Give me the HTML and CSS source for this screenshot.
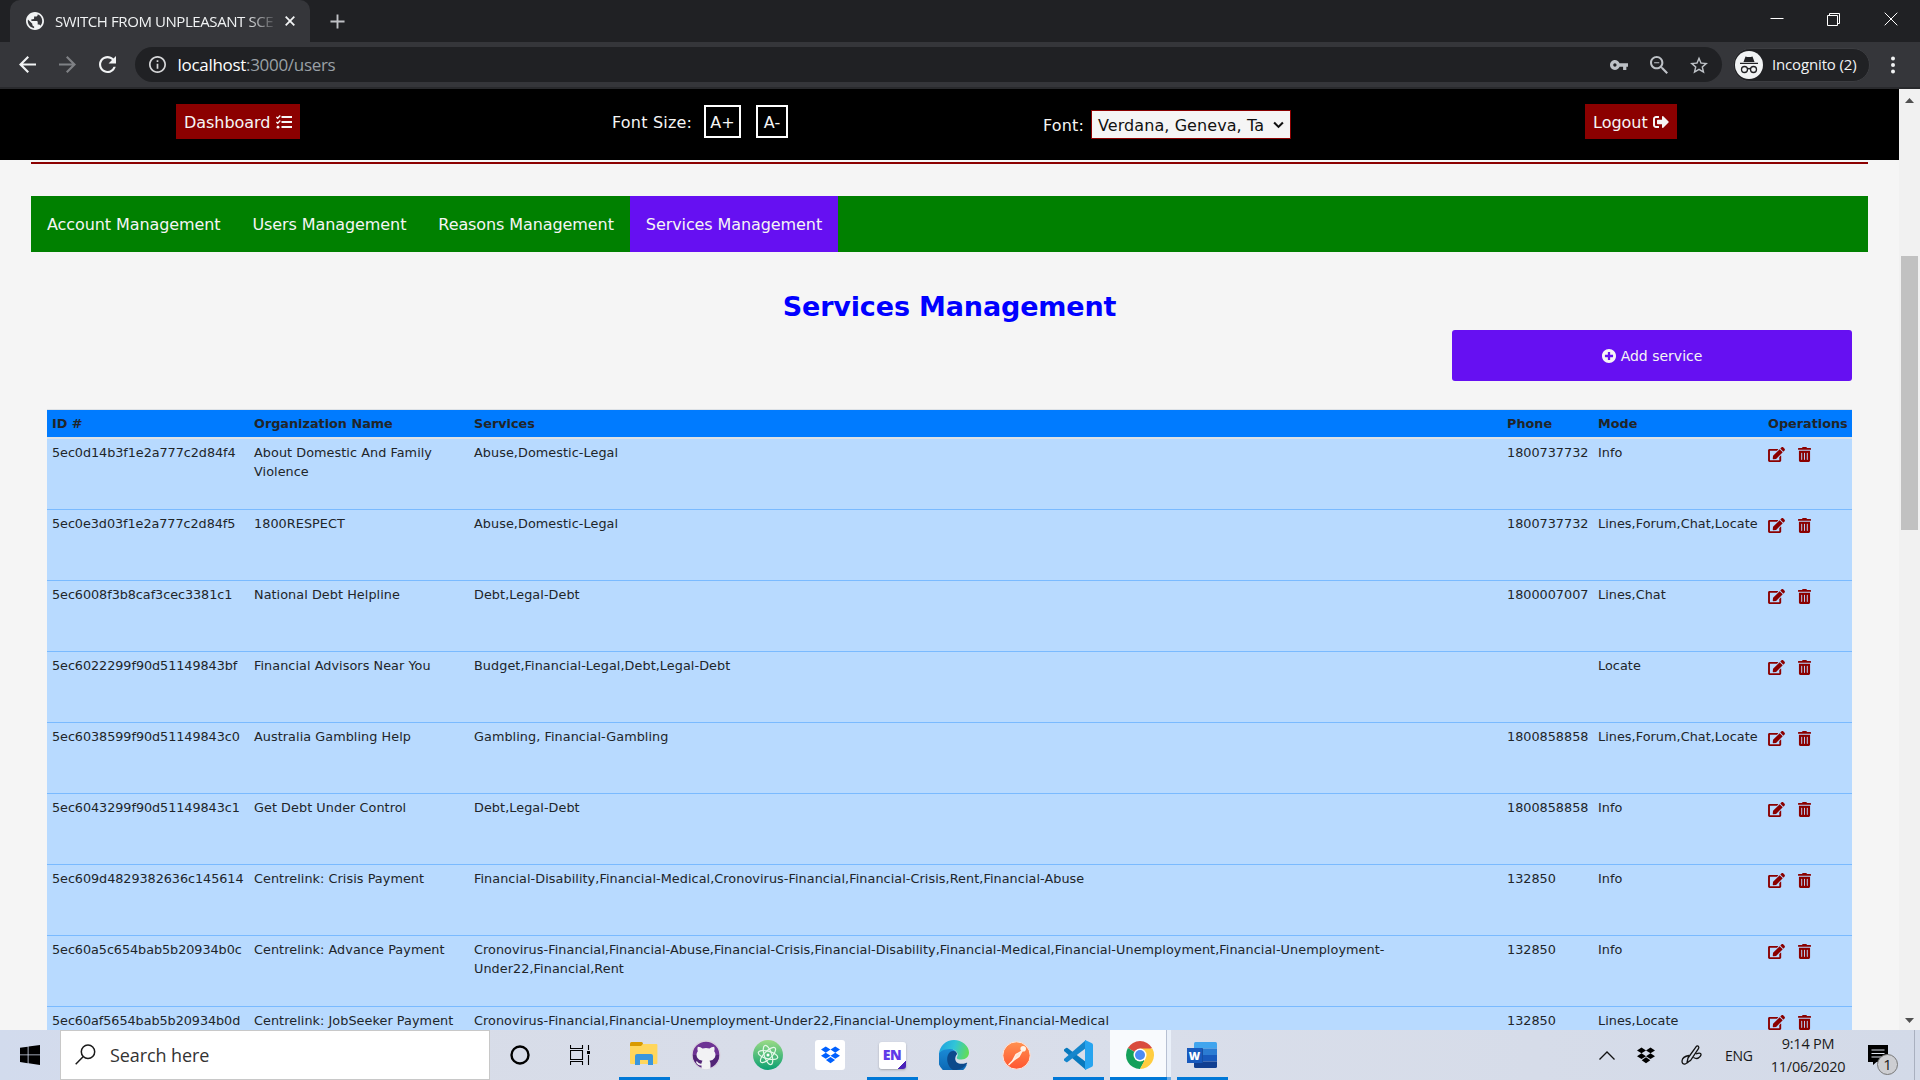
FILE: index.html
```html
<!DOCTYPE html>
<html lang="en">
<head>
<meta charset="utf-8">
<title>Services Management</title>
<link rel="stylesheet" href="styles.css">
</head>
<body>
<svg class="defs" width="0" height="0">
  <symbol id="edit" viewBox="0 0 576 512"><path d="M402.6 83.2l90.2 90.2c3.8 3.8 3.8 10 0 13.8L274.4 405.6l-92.8 10.3c-12.4 1.4-22.9-9.1-21.5-21.5l10.3-92.8L388.8 83.2c3.8-3.8 10-3.8 13.8 0zm162-22.9l-48.8-48.8c-15.2-15.2-39.9-15.2-55.2 0l-35.4 35.4c-3.8 3.8-3.8 10 0 13.8l90.2 90.2c3.8 3.8 10 3.8 13.8 0l35.4-35.4c15.2-15.3 15.2-40 0-55.2zM384 346.2V448H64V128h229.8c3.2 0 6.2-1.3 8.5-3.5l40-40c7.6-7.6 2.2-20.5-8.5-20.5H48C21.5 64 0 85.5 0 112v352c0 26.5 21.5 48 48 48h352c26.5 0 48-21.5 48-48V306.2c0-10.7-12.9-16-20.5-8.5l-40 40c-2.2 2.3-3.5 5.3-3.5 8.5z"/></symbol>
  <symbol id="trash" viewBox="0 0 448 512"><path d="M32 464a48 48 0 0 0 48 48h288a48 48 0 0 0 48-48V128H32zm272-256a16 16 0 0 1 32 0v224a16 16 0 0 1-32 0zm-96 0a16 16 0 0 1 32 0v224a16 16 0 0 1-32 0zm-96 0a16 16 0 0 1 32 0v224a16 16 0 0 1-32 0zM432 32H312l-9.4-18.7A24 24 0 0 0 281.1 0H166.8a23.72 23.72 0 0 0-21.4 13.3L136 32H16A16 16 0 0 0 0 48v32a16 16 0 0 0 16 16h416a16 16 0 0 0 16-16V48a16 16 0 0 0-16-16z"/></symbol>
  <symbol id="dropbox" viewBox="0 0 18 16"><path d="M4.5 0L9 2.9 4.5 5.8 0 2.9zM13.5 0L18 2.9l-4.5 2.9L9 2.9zM4.5 5.8L9 8.7l-4.500 2.900L0 8.700zM13.500 5.800L18 8.700l-4.500 2.900L9 8.700zM9 9.800l4.300 2.900L9 15.800l-4.300-3.100z"/></symbol>
</svg>

<header class="tabstrip">
  <div class="tab">
    <svg class="favicon" viewBox="2 2 20 20"><path d="M12 2C6.480 2 2 6.480 2 12s4.480 10 10 10 10-4.480 10-10S17.520 2 12 2zm-1 17.930c-3.950-.490-7-3.850-7-7.930 0-.620.080-1.210.210-1.790L9 15v1c0 1.100.900 2 2 2v1.930zm6.900-2.540c-.260-.810-1-1.390-1.900-1.390h-1v-3c0-.550-.450-1-1-1H8v-2h2c.550 0 1-.450 1-1V7h2c1.100 0 2-.900 2-2v-.410c2.930 1.190 5 4.060 5 7.410 0 2.080-.800 3.970-2.100 5.390z"/></svg>
    <span class="tab-title">SWITCH FROM UNPLEASANT SCE</span>
    <svg class="tab-close" viewBox="0 0 10 10"><path d="M.7.7l8.600 8.600M9.300.7L.7 9.300"/></svg>
  </div>
  <svg class="tab-new" viewBox="0 0 16 16"><path d="M8 .5v15M.5 8h15"/></svg>
  <div class="window-controls">
    <svg viewBox="0 0 14 14"><path d="M.5 6.500h13"/></svg>
    <svg viewBox="0 0 14 14"><path d="M.5 3.500h10v10h-10zM2.500 3.500v-2h10v10h-2"/></svg>
    <svg viewBox="0 0 14 14"><path d="M.7.700l12.600 12.600M13.300.700L.7 13.300"/></svg>
  </div>
</header>

<div class="toolbar">
  <div class="nav-buttons">
    <svg viewBox="4 4 16 16"><path d="M20 11H7.830l5.590-5.590L12 4l-8 8 8 8 1.410-1.410L7.830 13H20v-2z"/></svg>
    <svg class="dim" viewBox="4 4 16 16"><path d="M12 4l-1.410 1.410L16.170 11H4v2h12.170l-5.580 5.590L12 20l8-8z"/></svg>
    <svg viewBox="4 4 16 16"><path d="M17.650 6.350C16.200 4.900 14.210 4 12 4c-4.420 0-7.990 3.580-7.990 8s3.570 8 7.990 8c3.730 0 6.840-2.550 7.730-6h-2.080c-.820 2.330-3.040 4-5.650 4-3.310 0-6-2.690-6-6s2.690-6 6-6c1.660 0 3.140.690 4.220 1.780L13 11h7V4l-2.350 2.350z"/></svg>
  </div>
  <div class="omnibox">
    <svg class="info" viewBox="2 2 20 20"><path d="M11 17h2v-6h-2v6zm1-15C6.480 2 2 6.480 2 12s4.480 10 10 10 10-4.480 10-10S17.520 2 12 2zm0 18c-4.410 0-8-3.590-8-8s3.590-8 8-8 8 3.590 8 8-3.590 8-8 8zM11 9h2V7h-2v2z"/></svg>
    <span class="url">localhost<span class="path">:3000/users</span></span>
    <div class="omni-icons">
      <svg viewBox="1 6 22 12"><path d="M12.650 10C11.830 7.670 9.610 6 7 6c-3.310 0-6 2.690-6 6s2.690 6 6 6c2.610 0 4.830-1.670 5.650-4H17v4h4v-4h2v-4H12.650zM7 14c-1.100 0-2-.900-2-2s.900-2 2-2 2 .900 2 2-.900 2-2 2z"/></svg>
      <svg viewBox="3 3 17.500 17.500"><path d="M15.500 14h-.790l-.280-.270C15.410 12.590 16 11.110 16 9.500 16 5.910 13.090 3 9.500 3S3 5.910 3 9.500 5.910 16 9.500 16c1.610 0 3.090-.590 4.230-1.570l.270.280v.790l5 4.990L20.490 19l-4.990-5zm-6 0C7.010 14 5 11.990 5 9.500S7.010 5 9.500 5 14 7.010 14 9.500 11.990 14 9.500 14zM7 9h5v1H7z"/></svg>
      <svg viewBox="2 2 20 19"><path d="M22 9.240l-7.190-.620L12 2 9.190 8.630 2 9.240l5.460 4.730L5.820 21 12 17.270 18.180 21l-1.630-7.030L22 9.240zM12 15.400l-3.760 2.270 1-4.280-3.320-2.880 4.380-.380L12 6.100l1.710 4.040 4.380.380-3.320 2.880 1 4.280L12 15.400z"/></svg>
    </div>
  </div>
  <div class="incognito">
    <svg viewBox="0 0 28 28"><circle cx="14" cy="14" r="14" fill="#f1f3f4"/><path fill="#202124" d="M10.500 5.500q3.500 1 7 0l2 5.500h-11zM5 11.800h18V13H5z"/><g fill="none" stroke="#202124" stroke-width="1.300"><circle cx="9.500" cy="18.500" r="3"/><circle cx="18.500" cy="18.500" r="3"/><path d="M12.500 18q1.500-1 3 0"/></g></svg>
    <span>Incognito (2)</span>
  </div>
  <svg class="menu" viewBox="0 0 4 18"><circle cx="2" cy="2.500" r="2"/><circle cx="2" cy="9" r="2"/><circle cx="2" cy="15.500" r="2"/></svg>
</div>

<div class="viewport">
  <main class="page">
    <div class="topbar">
      <a class="top-btn dashboard"><span>Dashboard</span><svg viewBox="0 0 16 14"><path d="M5.500 1h10.500v2H5.500zM5.500 6h10.500v2H5.500zM5.500 11h10.500v2H5.500z"/><path class="ticks" d="M.4 1.900l1.300 1.300L4.300.5M.4 6.900l1.300 1.300L4.300 5.500"/><circle cx="2" cy="12.200" r="1.400"/></svg></a>
      <div class="font-size"><span>Font Size:</span><button>A+</button><button>A-</button></div>
      <div class="font-family"><span>Font:</span><div class="select"><span>Verdana, Geneva, Ta</span><svg viewBox="0 0 10 7"><path d="M1 1.200l4 4 4-4"/></svg></div></div>
      <a class="top-btn logout"><span>Logout</span><svg viewBox="0 0 512 512"><path d="M497 273L329 441c-15 15-41 4.500-41-17v-96H152c-13.300 0-24-10.700-24-24v-96c0-13.300 10.700-24 24-24h136V88c0-21.400 25.900-32 41-17l168 168c9.300 9.400 9.300 24.600 0 34zM192 436v-40c0-6.600-5.400-12-12-12H96c-17.700 0-32-14.300-32-32V160c0-17.700 14.300-32 32-32h84c6.600 0 12-5.400 12-12V76c0-6.600-5.400-12-12-12H96c-53 0-96 43-96 96v192c0 53 43 96 96 96h84c6.600 0 12-5.400 12-12z"/></svg></a>
    </div>
    <div class="content">
      <div class="rule"></div>
      <nav class="tabs">
        <a>Account Management</a><a>Users Management</a><a>Reasons Management</a><a class="active">Services Management</a>
      </nav>
      <section class="panel">
        <h1>Services Management</h1>
        <button class="add"><svg viewBox="8 8 496 496"><path d="M256 8C119 8 8 119 8 256s111 248 248 248 248-111 248-248S393 8 256 8zm144 276c0 6.600-5.400 12-12 12h-92v92c0 6.600-5.400 12-12 12h-56c-6.600 0-12-5.400-12-12v-92h-92c-6.600 0-12-5.400-12-12v-56c0-6.600 5.400-12 12-12h92v-92c0-6.600 5.400-12 12-12h56c6.600 0 12 5.400 12 12v92h92c6.600 0 12 5.400 12 12v56z"/></svg>Add service</button>
        <table class="services">
          <colgroup><col class="c-id"><col class="c-org"><col class="c-serv"><col class="c-phone"><col class="c-mode"><col class="c-ops"></colgroup>
          <thead><tr><th>ID #</th><th>Organization Name</th><th>Services</th><th>Phone</th><th>Mode</th><th>Operations</th></tr></thead>
          <tbody>
            <tr><td>5ec0d14b3f1e2a777c2d84f4</td><td>About Domestic And Family Violence</td><td>Abuse,Domestic-Legal</td><td>1800737732</td><td>Info</td><td><svg class="i-edit"><use href="#edit"/></svg><svg class="i-trash"><use href="#trash"/></svg></td></tr>
            <tr><td>5ec0e3d03f1e2a777c2d84f5</td><td>1800RESPECT</td><td>Abuse,Domestic-Legal</td><td>1800737732</td><td>Lines,Forum,Chat,Locate</td><td><svg class="i-edit"><use href="#edit"/></svg><svg class="i-trash"><use href="#trash"/></svg></td></tr>
            <tr><td>5ec6008f3b8caf3cec3381c1</td><td>National Debt Helpline</td><td>Debt,Legal-Debt</td><td>1800007007</td><td>Lines,Chat</td><td><svg class="i-edit"><use href="#edit"/></svg><svg class="i-trash"><use href="#trash"/></svg></td></tr>
            <tr><td>5ec6022299f90d51149843bf</td><td>Financial Advisors Near You</td><td>Budget,Financial-Legal,Debt,Legal-Debt</td><td></td><td>Locate</td><td><svg class="i-edit"><use href="#edit"/></svg><svg class="i-trash"><use href="#trash"/></svg></td></tr>
            <tr><td>5ec6038599f90d51149843c0</td><td>Australia Gambling Help</td><td>Gambling, Financial-Gambling</td><td>1800858858</td><td>Lines,Forum,Chat,Locate</td><td><svg class="i-edit"><use href="#edit"/></svg><svg class="i-trash"><use href="#trash"/></svg></td></tr>
            <tr><td>5ec6043299f90d51149843c1</td><td>Get Debt Under Control</td><td>Debt,Legal-Debt</td><td>1800858858</td><td>Info</td><td><svg class="i-edit"><use href="#edit"/></svg><svg class="i-trash"><use href="#trash"/></svg></td></tr>
            <tr><td>5ec609d4829382636c145614</td><td>Centrelink: Crisis Payment</td><td>Financial-Disability,Financial-Medical,Cronovirus-Financial,Financial-Crisis,Rent,Financial-Abuse</td><td>132850</td><td>Info</td><td><svg class="i-edit"><use href="#edit"/></svg><svg class="i-trash"><use href="#trash"/></svg></td></tr>
            <tr><td>5ec60a5c654bab5b20934b0c</td><td>Centrelink: Advance Payment</td><td>Cronovirus-Financial,Financial-Abuse,Financial-Crisis,Financial-Disability,Financial-Medical,Financial-Unemployment,Financial-Unemployment-Under22,Financial,Rent</td><td>132850</td><td>Info</td><td><svg class="i-edit"><use href="#edit"/></svg><svg class="i-trash"><use href="#trash"/></svg></td></tr>
            <tr><td>5ec60af5654bab5b20934b0d</td><td>Centrelink: JobSeeker Payment</td><td>Cronovirus-Financial,Financial-Unemployment-Under22,Financial-Unemployment,Financial-Medical</td><td>132850</td><td>Lines,Locate</td><td><svg class="i-edit"><use href="#edit"/></svg><svg class="i-trash"><use href="#trash"/></svg></td></tr>
          </tbody>
        </table>
      </section>
    </div>
  </main>
  <aside class="scrollbar">
    <svg viewBox="0 0 9 5"><path d="M0 5L4.500 0 9 5z"/></svg>
    <div class="thumb"></div>
    <svg viewBox="0 0 9 5"><path d="M0 0l4.500 5L9 0z"/></svg>
  </aside>
</div>

<footer class="taskbar">
  <div class="start"><svg width="20" height="20" viewBox="0 0 20 20"><path d="M0 2.800L7.700 1.700V9.400H0zM8.500 1.600L20 0v9.400H8.500zM0 10.300h7.700v7.900L0 17zM8.500 10.300H20V20L8.500 18.300z"/></svg></div>
  <div class="search"><svg width="21" height="21" viewBox="0 0 21 21"><g fill="none" stroke="#1a1a1a" stroke-width="1.500"><circle cx="13" cy="7.800" r="6.700"/><path d="M8.300 12.500L.7 20.200"/></g></svg><span>Search here</span></div>
  <div class="apps">
    <div class="app cortana"><svg width="20" height="20" viewBox="0 0 20 20"><circle cx="10" cy="10" r="8.500" fill="none" stroke="#000" stroke-width="2.400"/></svg></div>
    <div class="app view"><svg width="20" height="20" viewBox="0 0 20 20"><path fill="none" stroke="#000" stroke-width="1.100" d="M.5 0v3.500h12V0M.5 5.500h12v9H.500zM.5 20v-3.500h12V20M18.500 0v5M18.500 10v10"/><path d="M17 6h3v3h-3z"/></svg></div>
    <div class="app open"><svg width="28" height="26" viewBox="0 0 28 26"><path fill="#d99a00" d="M0 1.500Q0 0 1.500 0h10q1.500 0 1.500 2l-1 2.500H0z"/><path fill="#ffd65c" d="M0 4h11l2-2h13.500q.9 0 .9 1v18q0 1-1 1H1q-1 0-1-1z"/><path fill="#3a96dd" d="M5 23V14q0-2 2-2h14q2 0 2 2v9h-5v-5h-8v5z"/></svg></div>
    <div class="app"><svg width="30" height="30" viewBox="0 0 30 30"><circle cx="15" cy="15" r="14" fill="#6e3394" stroke="#d9d4df" stroke-width="1.300"/><path fill="#522476" d="M2 15a13 13 0 0 0 26 0z"/><path fill="#f2f2f4" d="M6.800 6.700q3 0 4.700 1.700 3.500-.8 7 0 1.700-1.700 4.700-1.700.9 2.500 0 4.500 2.300 3 .5 6.500-1.300 2.500-5.200 3 1 1.300 1 3v4.700q-4.500 1.500-9 0v-3q-4 .6-5.600-3.700l1-.4q1.800 2.800 4.600 2.300.2-1.800 1-2.900-4-.6-5.200-3-1.800-3.500.5-6.500-.9-2 0-4.500z"/></svg></div>
    <div class="app"><svg width="30" height="30" viewBox="0 0 30 30"><defs><linearGradient id="atom" x2="0" y2="1"><stop stop-color="#9bdb86"/><stop offset="1" stop-color="#0ba071"/></linearGradient></defs><circle cx="15" cy="15" r="15" fill="url(#atom)"/><g fill="none" stroke="#e4f8e8" stroke-width="1.200"><ellipse cx="15" cy="15" rx="10" ry="3.800" transform="rotate(15 15 15)"/><ellipse cx="15" cy="15" rx="10" ry="3.800" transform="rotate(72 15 15)"/><ellipse cx="15" cy="15" rx="10" ry="3.800" transform="rotate(-45 15 15)"/></g><circle cx="15" cy="15" r="1.500" fill="#fff"/></svg></div>
    <div class="app"><span class="white-tile"><svg class="dropbox-blue" width="19" height="18"><use href="#dropbox"/></svg></span></div>
    <div class="app open"><span class="en-tile">EN</span></div>
    <div class="app"><svg width="30" height="30" viewBox="0 0 30 30"><defs><linearGradient id="edge" x1="0" y1=".3" x2="1" y2=".5"><stop stop-color="#1fa2df"/><stop offset=".5" stop-color="#31c5d8"/><stop offset="1" stop-color="#62dd58"/></linearGradient><linearGradient id="edge2" x2="0" y2="1"><stop stop-color="#1b8cd8"/><stop offset="1" stop-color="#0a62ae"/></linearGradient></defs><path fill="url(#edge2)" d="M0 13C2 9 6 7.500 10 8c6 1 8 4 7 7-3 3-3 9 3 9l8 .5A15 15 0 1 1 0 13z"/><path fill="#0c4a8c" d="M11 12c-5 5-3 14 3 18 6 .6 11-2 14-6.500.5-1-.2-1-1-.6-7 2.700-12-1-10.500-6 .5-2 1.500-2 1.500-3.500-1-3-5-3-7-1.400z"/><path fill="url(#edge)" d="M0 14C.5 6 7 0 15 0s15 6 15 12.500c0 4-3 7-7.500 7-3.500 0-5.500-1-4.500-2.600 2-2.800-.3-8-7.500-8C5 9 1 11 0 14z"/></svg></div>
    <div class="app"><svg width="29" height="29" viewBox="0 0 29 29"><defs><linearGradient id="post" x2="0" y2="1"><stop stop-color="#ff9150"/><stop offset="1" stop-color="#ff5530"/></linearGradient></defs><circle cx="14.500" cy="14.500" r="13.700" fill="url(#post)" stroke="#ffe8de" stroke-width="1"/><circle cx="21.200" cy="7.700" r="2.800" fill="#fff3e8"/><path d="M20 10l-6 3.500-3.500 6.500-4 4 5.500-5 5-3.500z" fill="#ffe1d0" stroke="#fff1e5" stroke-width="1.400"/></svg></div>
    <div class="app open"><svg width="30" height="30" viewBox="0 0 30 30"><path fill="#0879bd" d="M1 9.500L3 8q.8-.4 1.500 0L23 22v8L1 11z"/><path fill="#1586cc" d="M1 20.500L3 22q.8.400 1.500 0L23 8V0L1 19z"/><path fill="#27a4ef" d="M22 0l6.500 3q1.500.7 1.500 2v20q0 1.300-1.500 2L22 30z"/></svg></div>
    <div class="app open current"><svg width="28" height="28" viewBox="0 0 28 28"><path fill="#d94b3d" d="M14 14L1.880 7A14 14 0 0 1 26.120 7z"/><path fill="#14a05a" d="M14 14v14A14 14 0 0 1 1.880 7z"/><path fill="#14a05a" d="M14 14l4.500 6L14 28l-6-6z"/><path fill="#ffcd40" d="M14 7.500h12.400A14 14 0 0 1 14 28l5.600-10.800z"/><circle cx="14" cy="14" r="6.500" fill="#fff"/><circle cx="14" cy="14" r="5" fill="#4c8bf5"/></svg></div>
    <div class="app open"><svg width="30" height="26" viewBox="0 0 30 26"><path fill="#41a5ee" d="M7 1.500Q7 0 8.500 0h20Q30 0 30 1.500v5H7z"/><path fill="#2b7cd3" d="M7 6.500h23V13H7z"/><path fill="#185abd" d="M7 13h23v6.500H7z"/><path fill="#103f91" d="M7 19.500h23v5q0 1.500-1.500 1.500h-20Q7 26 7 24.500z"/><path fill="#164fa5" d="M0 6h15q1 0 1 1v14H0z"/><rect y="6" width="15" height="15" rx="1" fill="#185abd"/><text class="word-letter" x="7.500" y="17.500">W</text></svg></div>
  </div>
  <div class="tray">
    <svg class="chev" width="16" height="9" viewBox="0 0 16 9"><path fill="none" stroke="#111" stroke-width="1.300" d="M.5 8.500L8 1l7.500 7.500"/></svg>
    <svg class="tray-dropbox" width="18" height="17"><use href="#dropbox"/></svg>
    <svg class="pen" width="21" height="20" viewBox="0 0 21 20"><g fill="none" stroke="#111" stroke-width="1.300"><path d="M7 13L15 1.800q1.500-1.500 2.500-.3.700 1-.2 2.400L9.500 15.500 6 17.500zM8 10.500q-6.500 1-7 5.500 0 3.500 3.200 3 2.800-.8 4.500-3.500M12.500 12.500q3.500 2 5.500 0 3-2.500 1.500-4-1.200-1-4.500.5"/></g></svg>
    <span class="lang">ENG</span>
    <div class="clock"><span>9:14 PM</span><span>11/06/2020</span></div>
    <div class="notify"><svg width="20" height="20" viewBox="0 0 20 20"><path d="M0 0h20v17H8.500L5 20v-3H0z"/><path stroke="#dfe4ee" stroke-width="1.200" d="M3.500 5h13M3.500 8.500h13M3.500 12h10"/></svg><span class="badge">1</span></div>
  </div>
</footer>
</body>
</html>
```
FILE: styles.css
```css
* { box-sizing: border-box; }
html, body { margin: 0; height: 100%; overflow: hidden; }
body {
  display: grid;
  grid-template-rows: 42px 47px 941px 50px;
  width: 1920px;
  font-family: "Open Sans", "Noto Sans", sans-serif;
}
svg { display: block; flex: none; }
.defs { position: absolute; }

/* Browser tab strip */
.tabstrip { display: flex; align-items: center; background: #202124; padding-left: 10px; }
.tab {
  display: flex; align-items: center;
  width: 300px; height: 42px; padding: 0 15px 0 16px;
  background: #35363a; border-radius: 10px 10px 0 0;
}
.favicon { width: 18px; height: 18px; fill: #f1f3f4; }
.tab-title {
  width: 221px; margin-left: 11px; white-space: nowrap;
  font-size: 15px; letter-spacing: -0.42px; color: #f1f3f4;
  -webkit-mask-image: linear-gradient(90deg, #000 190px, transparent 224px);
  mask-image: linear-gradient(90deg, #000 190px, transparent 224px);
}
.tab-close { width: 10px; height: 10px; margin-left: 9px; fill: none; stroke: #f1f3f4; stroke-width: 1.8; }
.tab-new { width: 15px; height: 15px; margin-left: 20px; fill: none; stroke: #bfc1c5; stroke-width: 2; }
.window-controls { display: flex; gap: 43px; margin: 0 22px 5px auto; }
.window-controls svg { width: 14px; height: 14px; fill: none; stroke: #fff; stroke-width: 1; }

/* Browser toolbar */
.toolbar { display: flex; align-items: center; background: #35363a; border-bottom: 2px solid #292a2d; padding: 5px 25.5px 5px 19px; }
.nav-buttons { display: flex; gap: 23px; width: 116px; }
.nav-buttons svg { width: 17px; height: 17px; fill: #f1f3f4; }
.nav-buttons .dim { fill: #7f8185; }
.omnibox { display: flex; align-items: center; width: 1587px; height: 35px; padding: 0 14px; border-radius: 18px; background: #202124; }
.info { width: 17px; height: 17px; fill: #d6d7d9; }
.url { margin-left: 11.5px; font-size: 17px; letter-spacing: -0.3px; color: #fff; }
.path { color: #9aa0a6; }
.omni-icons { display: flex; align-items: center; gap: 22px; margin-left: auto; fill: #bdc1c6; }
.omni-icons svg { width: 18px; height: 18px; }
.incognito { display: flex; align-items: center; width: 137px; height: 34px; margin-left: 11px; padding-left: 1px; border: 1px solid #3c3d41; border-radius: 17px; background: #202124; color: #f1f3f4; font-size: 15px; letter-spacing: -0.15px; }
.incognito svg { width: 28px; height: 28px; margin-right: 9px; }
.incognito span { padding-bottom: 1px; }
.menu { width: 4px; height: 18px; margin-left: auto; fill: #f1f3f4; }

/* Web page */
.viewport { display: grid; grid-template-columns: 1899px 21px; overflow: hidden; }
.page { overflow: hidden; height: 941px; background: #f5f5f5; font-family: "DejaVu Sans", Verdana, sans-serif; color: #212529; }
.topbar { display: flex; align-items: flex-start; height: 71px; padding: 15px 0 0 176px; background: #000; color: #f5f5f5; font-size: 16px; }
.top-btn { display: flex; align-items: center; justify-content: space-between; height: 35px; padding: 1px 8px 0; background: #8b0000; }
.top-btn svg { width: 16px; height: 16px; fill: #f5f5f5; }
.ticks { fill: none; stroke: #f5f5f5; stroke-width: 1.3; }
.dashboard { width: 124px; letter-spacing: -0.05px; }
.font-size { display: flex; align-items: center; height: 35px; margin-left: 312px; }
.font-size span { width: 92px; padding-top: 1px; letter-spacing: 0.2px; }
.font-size button { height: 33px; width: 37px; padding: 1px 0 0; margin-right: 15px; border: 2px solid #fff; background: #000; color: #f5f5f5; font: inherit; }
.font-size button:last-child { width: 32px; margin: 0; }
.font-family { display: flex; align-items: center; height: 29px; margin: 6px 0 0 255px; }
.font-family > span { width: 48px; padding-top: 1px; letter-spacing: 0.15px; }
.select { display: flex; align-items: center; justify-content: space-between; width: 200px; height: 29px; padding: 1px 6px 0; border: 1px solid #8b0000; background: #f5f5f5; color: #111; letter-spacing: 0.08px; }
.select svg { width: 11px; height: 8px; fill: none; stroke: #111; stroke-width: 1.9; }
.logout { width: 92px; margin-left: 294px; }

.content { width: 1837px; margin-left: 31px; padding-top: 2px; }
.rule { height: 2px; background: #8b0000; }
.tabs { display: flex; height: 56px; margin-top: 32px; background: #008000; color: #f5f5f5; font-size: 16px; letter-spacing: -0.09px; }
.tabs a { display: flex; align-items: center; padding: 0 16px; }
.tabs .active { background: #6610f2; }
.panel { padding: 38px 16px 0; }
h1 { margin: 0; text-align: center; font-size: 27px; letter-spacing: -0.15px; line-height: 34px; color: #0000ff; }
.add { display: flex; align-items: center; justify-content: center; gap: 5px; width: 400px; height: 51px; margin: 6px 0 28px auto; border: 0; border-radius: 3px; background: #6610f2; color: #f5f5f5; font: 14px "DejaVu Sans", sans-serif; }
.add svg { width: 14px; height: 14px; fill: #f5f5f5; }

.services { width: 1805px; table-layout: fixed; border-spacing: 0; border-collapse: separate; font-size: 12.8px; line-height: 19.2px; }
.c-id { width: 202px; }
.c-org { width: 220px; }
.c-serv { width: 1033px; }
.c-phone { width: 91px; }
.c-mode { width: 170px; }
.c-ops { width: 89px; }
.services th { height: 30px; padding: 0 0 0 5px; text-align: left; background: #007bff; border-top: 1px solid #dee2e6; border-bottom: 2px solid #dee2e6; }
.services td { height: 71px; padding: 4px 5px 0; vertical-align: top; background: #b8daff; border-top: 1px solid #7abaff; }
.services tbody tr:first-child td { height: 70px; border-top: 0; }
.services td:nth-child(1) { letter-spacing: -0.06px; }
.services td:nth-child(2) { letter-spacing: 0.06px; }
.services td:nth-child(3) { letter-spacing: 0.065px; }
.services td:nth-child(5) { letter-spacing: 0.05px; }
.services td:last-child { padding-top: 8px; white-space: nowrap; font-size: 0; }
.services td svg { display: inline-block; height: 15px; fill: #8b0000; }
.i-edit { width: 17px; margin-right: 13px; }
.i-trash { width: 13px; }

.scrollbar { display: flex; flex-direction: column; align-items: center; background: #f1f1f1; padding: 9px 0 7px; }
.scrollbar svg { width: 9px; height: 5px; fill: #505050; }
.thumb { width: 17px; height: 274px; margin: 153px 0 auto; background: #c1c1c1; }

/* Windows taskbar */
.taskbar { display: flex; background: linear-gradient(90deg, #d2dbed, #d7dce8 20%, #d9deea 60%, #d3dae8); color: #1a1a1a; }
.start { display: grid; place-items: center; width: 60px; }
.search { display: flex; align-items: center; width: 430px; padding: 0 14px; border: 1px solid #c8c8c8; background: #fff; font-size: 18px; letter-spacing: -0.1px; color: #333; }
.search svg { margin-bottom: 1px; }
.search span { margin-left: 14px; }
.apps { display: flex; }
.app { position: relative; display: grid; place-items: center; width: 62px; height: 50px; }
.app:first-child { width: 61px; }
.cortana svg { margin-right: 2px; }
.view svg { margin-right: 4px; }
.open::after { content: ""; position: absolute; left: 6px; bottom: 0; width: 51px; height: 3px; background: #0078d7; }
.current { background: linear-gradient(90deg, transparent 1px, #f8fafd 1px 57px, #b7c0d2 57px 58px, #eaf0f9 58px 62px, transparent 62px); }
.current::after { left: 1px; width: 61px; background: linear-gradient(90deg, #0078d7 57px, #69aae4 57px); }
.white-tile { display: grid; place-items: center; width: 30px; height: 30px; border-radius: 3px; background: #fff; }
.dropbox-blue { fill: #0061ff; }
.en-tile { width: 27px; height: 27px; border-radius: 3px; background: linear-gradient(135deg, #fff 84%, #4a23b8 84%); box-shadow: 0 1px 2px #7778; color: #6039e8; font-size: 14px; font-weight: 800; line-height: 25px; text-align: center; letter-spacing: -0.5px; }
.word-letter { fill: #fff; font: 800 11px "Open Sans", sans-serif; text-anchor: middle; }
.tray { display: flex; align-items: center; margin-left: auto; width: 315px; font-size: 14px; }
.tray-dropbox { margin-left: 22px; fill: #000; }
.pen { margin-left: 26px; }
.lang { width: 30px; margin-left: 23px; letter-spacing: -0.3px; }
.clock { display: flex; flex-direction: column; align-items: center; width: 78px; margin-left: 14px; font-size: 14.5px; line-height: 23px; letter-spacing: -0.25px; }
.notify { position: relative; width: 20px; margin-left: 21px; }
.badge { position: absolute; left: 9px; top: 9px; width: 21px; height: 21px; border: 1px solid #777; border-radius: 50%; background: #cdced2; font-size: 15px; line-height: 19px; text-align: center; }
.taskbar::after { content: ""; width: 1px; height: 50px; margin-right: 5px; background: #a9b0bf; }
```
